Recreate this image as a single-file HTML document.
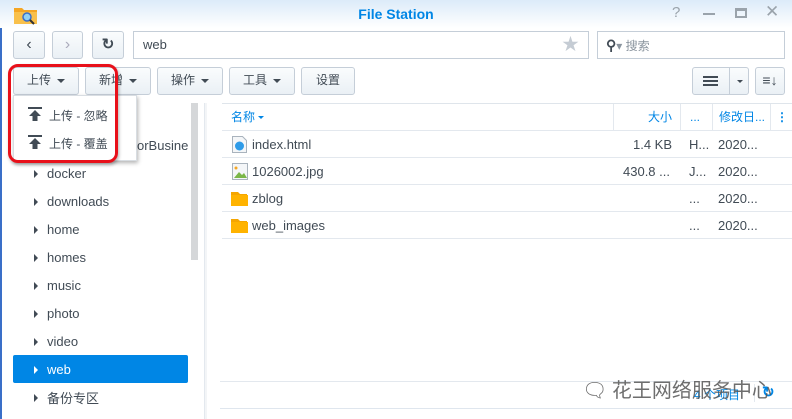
<!DOCTYPE html>
<html><head><meta charset="utf-8"><style>
*{margin:0;padding:0;box-sizing:border-box}
body{width:792px;height:419px;overflow:hidden;background:#fff;font-family:"Liberation Sans","Noto Sans CJK SC",sans-serif;font-size:13px;color:#414b55;position:relative}
.a{position:absolute}
.title{left:0;top:0;width:792px;height:28px;background:linear-gradient(#dcebf9,#fff)}
.btn{position:absolute;border:1px solid #c5ced8;border-radius:3px;background:linear-gradient(#fafcfd,#eaf0f5);text-align:center;line-height:25px;font-size:12px;color:#414b55}
.box{position:absolute;border:1px solid #c5ced8;background:#fff}
.tri{display:inline-block;width:0;height:0;border-left:4px solid transparent;border-right:4px solid transparent;border-top:4px solid #414b55;vertical-align:middle;margin-left:6px}
.ti{position:absolute;left:47px;font-size:13px}
.ta{position:absolute;left:34px;width:0;height:0;border-top:4px solid transparent;border-bottom:4px solid transparent;border-left:4px solid #414b55}
.row{position:absolute;left:222px;width:570px;height:27px;border-bottom:1px solid #e3e8ee;line-height:27px}
</style></head><body>
<div class="a" style="left:0;top:0;width:2px;height:419px;background:#3a6fc8"></div>
<div class="a title"></div>
<svg class="a" style="left:13px;top:4px" width="25" height="21"><path d="M1 4h8l2 2h13v14H1z" fill="#f5a623"/><rect x="1" y="8" width="23" height="12" fill="#f9c04b"/><circle cx="14" cy="13" r="4" fill="#8fd0f5" stroke="#3a6fc8" stroke-width="1.5"/><path d="M17 16l4 4" stroke="#333" stroke-width="2"/></svg>
<div class="a" style="left:0;width:792px;top:6px;text-align:center;font-weight:bold;font-size:14px;color:#0086e5">File Station</div>
<div class="a" style="left:672px;top:4px;color:#9aa3ab;font-size:15px">?</div>
<div class="a" style="left:703px;top:13px;width:12px;height:2px;background:#9aa3ab"></div>
<div class="a" style="left:735px;top:8px;width:12px;height:10px;border:2px solid #9aa3ab;border-top-width:3px"></div>
<div class="a" style="left:765px;top:2px;color:#9aa3ab;font-size:17px">✕</div>

<div class="btn" style="left:13px;top:31px;width:32px;height:28px;font-size:16px">‹</div>
<div class="btn" style="left:52px;top:31px;width:31px;height:28px;font-size:16px;color:#aab">›</div>
<div class="btn" style="left:92px;top:31px;width:32px;height:28px;font-size:15px;font-weight:bold">↻</div>
<div class="box" style="left:133px;top:31px;width:456px;height:28px;padding-left:9px;line-height:26px;font-size:13px">web<span style="position:absolute;right:9px;color:#c5ccd4;font-size:17px;top:0">★</span></div>
<div class="box" style="left:597px;top:31px;width:188px;height:28px;line-height:26px;padding-left:8px;color:#8a949e;font-size:12px"><b style="color:#414b55;font-size:14px">⚲</b>▾ 搜索</div>

<div class="btn" style="left:13px;top:67px;width:66px;height:28px">上传<span class="tri"></span></div>
<div class="btn" style="left:85px;top:67px;width:66px;height:28px">新增<span class="tri"></span></div>
<div class="btn" style="left:157px;top:67px;width:66px;height:28px">操作<span class="tri"></span></div>
<div class="btn" style="left:229px;top:67px;width:66px;height:28px">工具<span class="tri"></span></div>
<div class="btn" style="left:301px;top:67px;width:54px;height:28px">设置</div>
<div class="btn" style="left:692px;top:67px;width:57px;height:28px"><span style="position:absolute;left:10px;top:8px;width:15px;height:10px;border-top:2px solid #414b55;border-bottom:2px solid #414b55"></span><span style="position:absolute;left:10px;top:12px;width:15px;height:2px;background:#414b55"></span><span style="position:absolute;left:36px;top:0;height:26px;border-left:1px solid #c5ced8"></span><span class="tri" style="position:absolute;left:38px;top:12px;border-width:3px"></span></div>
<div class="btn" style="left:755px;top:67px;width:30px;height:28px;font-weight:bold;font-size:14px">≡↓</div>

<div class="a" style="left:191px;top:103px;width:7px;height:157px;background:#d5d7d9"></div>
<div class="a" style="left:204px;top:103px;width:1px;height:316px;background:#e3e8ee"></div>
<div class="a" style="left:205px;top:103px;width:2px;height:316px;background:#f3f5f7"></div>

<div class="a" style="left:137px;top:138px;font-size:13px">orBusine</div>
<div class="ta" style="top:170px"></div><div class="ti" style="top:166px">docker</div>
<div class="ta" style="top:198px"></div><div class="ti" style="top:194px">downloads</div>
<div class="ta" style="top:226px"></div><div class="ti" style="top:222px">home</div>
<div class="ta" style="top:254px"></div><div class="ti" style="top:250px">homes</div>
<div class="ta" style="top:282px"></div><div class="ti" style="top:278px">music</div>
<div class="ta" style="top:310px"></div><div class="ti" style="top:306px">photo</div>
<div class="ta" style="top:338px"></div><div class="ti" style="top:334px">video</div>
<div class="a" style="left:13px;top:355px;width:175px;height:28px;background:#0086e5;border-radius:2px"></div>
<div class="ta" style="top:366px;border-left-color:#fff"></div><div class="ti" style="top:362px;color:#fff">web</div>
<div class="ta" style="top:394px"></div><div class="ti" style="top:388px">备份专区</div>

<div class="a" style="left:222px;top:103px;width:570px;height:28px;border-top:1px solid #dfe5eb;border-bottom:1px solid #e3e8ee;color:#0086e5;font-size:12px;line-height:27px">
<span class="a" style="left:9px">名称 <span class="tri" style="border-top-color:#0086e5;margin-left:0;border-width:3px"></span></span>
<span class="a" style="left:391px;top:0;height:27px;border-left:1px solid #e3e8ee"></span>
<span class="a" style="left:426px">大小</span>
<span class="a" style="left:458px;top:0;height:27px;border-left:1px solid #e3e8ee"></span>
<span class="a" style="left:468px">...</span>
<span class="a" style="left:490px;top:0;height:27px;border-left:1px solid #e3e8ee"></span>
<span class="a" style="left:497px">修改日...</span>
<span class="a" style="left:548px;top:0;height:27px;border-left:1px solid #e3e8ee"></span>
<span class="a" style="left:554px;font-weight:bold">⋮</span></div>

<div class="row" style="top:131px"><svg class="a" style="left:10px;top:5px" width="15" height="17"><path d="M.5 .5h10l4 4v12H.5z" fill="#f4f6f8" stroke="#a9b3bd"/><circle cx="7.5" cy="10" r="4.5" fill="#2e9be8"/></svg><span class="a" style="left:30px">index.html</span><span class="a" style="left:411px">1.4 KB</span><span class="a" style="left:467px">H...</span><span class="a" style="left:496px">2020...</span></div>
<div class="row" style="top:158px"><svg class="a" style="left:10px;top:5px" width="16" height="17"><rect x=".5" y=".5" width="15" height="16" fill="#f4f6f8" stroke="#a9b3bd"/><path d="M2 15l5-6 3 3 2-2 3 5z" fill="#7ab648"/><circle cx="4" cy="5" r="1.5" fill="#f5a623"/></svg><span class="a" style="left:30px">1026002.jpg</span><span class="a" style="left:401px">430.8 ...</span><span class="a" style="left:467px">J...</span><span class="a" style="left:496px">2020...</span></div>
<div class="row" style="top:185px"><svg class="a" style="left:9px;top:6px" width="17" height="15"><path d="M0 1h7l2 2h7v12H0z" fill="#f5a600"/><rect y="4" width="17" height="11" fill="#ffb300"/></svg><span class="a" style="left:30px">zblog</span><span class="a" style="left:467px">...</span><span class="a" style="left:496px">2020...</span></div>
<div class="row" style="top:212px"><svg class="a" style="left:9px;top:6px" width="17" height="15"><path d="M0 1h7l2 2h7v12H0z" fill="#f5a600"/><rect y="4" width="17" height="11" fill="#ffb300"/></svg><span class="a" style="left:30px">web_images</span><span class="a" style="left:467px">...</span><span class="a" style="left:496px">2020...</span></div>

<div class="a" style="left:220px;top:381px;width:572px;height:1px;background:#e3e8ee"></div>
<div class="a" style="left:220px;top:408px;width:572px;height:1px;background:#dfe6ee"></div>
<div class="a" style="left:694px;top:386px;color:#0086e5;font-size:12px">4 个项目</div>
<div class="a" style="left:754px;top:384px;height:18px;border-left:1px solid #e3e8ee"></div>
<div class="a" style="left:762px;top:383px;color:#0086e5;font-weight:bold;font-size:15px">↻</div>
<div class="a" style="left:582px;top:374px;color:#555;font-size:20px;opacity:.85;font-family:'Noto Sans CJK SC',sans-serif">🗨 花王网络服务中心</div>

<div class="a" style="left:13px;top:95px;width:124px;height:66px;background:#fff;border:1px solid #d8dde2;box-shadow:1px 2px 4px rgba(0,0,0,.3)">
<svg class="a" style="left:14px;top:11px" width="14" height="14"><rect width="14" height="2" fill="#414b55"/><path d="M7 3l6 6H9.5v5h-5V9H1z" fill="#414b55"/></svg>
<div class="a" style="left:35px;top:11px;font-size:12px">上传 - 忽略</div>
<svg class="a" style="left:14px;top:39px" width="14" height="14"><rect width="14" height="2" fill="#414b55"/><path d="M7 3l6 6H9.5v5h-5V9H1z" fill="#414b55"/></svg>
<div class="a" style="left:35px;top:39px;font-size:12px">上传 - 覆盖</div></div>
<div class="a" style="left:8px;top:64px;width:110px;height:99px;border:3px solid #e8101a;border-radius:10px;box-shadow:1px 2px 3px rgba(0,0,0,.3)"></div>
</body></html>
